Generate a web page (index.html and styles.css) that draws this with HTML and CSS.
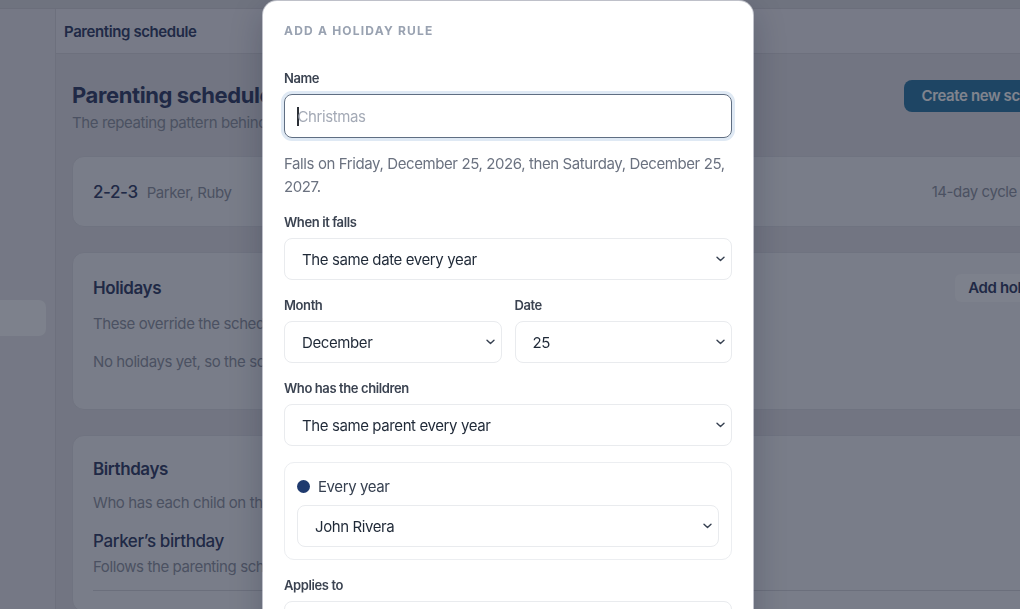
FILE: index.html
```html
<!DOCTYPE html>
<html lang="en">
<head>
<meta charset="utf-8">
<title>Parenting schedule</title>
<link rel="stylesheet" href="styles.css">
</head>
<body>
<div class="app">
  <div class="topbar"></div>
  <div class="shell">
    <aside class="sidebar">
      <div class="nav-item"></div>
    </aside>
    <div class="content">
      <header class="pagebar">Parenting schedule</header>
      <main class="main">
        <div class="page-head">
          <div>
            <h1 class="title">Parenting schedule</h1>
            <p class="subtitle">The repeating pattern behind every week of your parenting time.</p>
          </div>
          <button class="btn-primary">Create new schedule</button>
        </div>
        <div class="cards">
          <section class="card cycle-card">
            <div class="cycle-left"><span class="cycle-name">2-2-3</span><span class="kids">Parker, Ruby</span></div>
            <div class="cycle-right"><span class="muted">14-day cycle</span><span class="edit">Edit</span></div>
          </section>
          <section class="card holidays-card">
            <div class="card-head">
              <h2 class="card-title">Holidays</h2>
              <button class="btn-soft">Add holiday</button>
            </div>
            <p class="muted first">These override the schedule on the days they fall.</p>
            <p class="muted second">No holidays yet, so the schedule runs as usual all year.</p>
          </section>
          <section class="card birthdays-card">
            <h2 class="card-title">Birthdays</h2>
            <p class="muted first">Who has each child on their birthday.</p>
            <div class="bday">
              <div class="bday-name">Parker’s birthday</div>
              <div class="muted bday-sub">Follows the parenting schedule</div>
            </div>
          </section>
        </div>
      </main>
    </div>
  </div>
</div>

<div class="backdrop"></div>

<div class="modal">
  <div class="eyebrow">Add a holiday rule</div>

  <div class="field">
    <label class="label">Name</label>
    <div class="input focused"><span class="caret"></span><span class="placeholder">Christmas</span></div>
  </div>
  <p class="help">Falls on Friday, December 25, 2026, then Saturday, December 25, 2027.</p>

  <div class="field after-help">
    <label class="label">When it falls</label>
    <div class="select"><span>The same date every year</span><svg class="chev" width="9" height="6" viewBox="0 0 9 6"><path d="M1 1.2l3.5 3.4L8 1.2" fill="none" stroke="#374151" stroke-width="1.4" stroke-linecap="round" stroke-linejoin="round"/></svg></div>
  </div>

  <div class="field-row">
    <div class="field">
      <label class="label">Month</label>
      <div class="select"><span>December</span><svg class="chev" width="9" height="6" viewBox="0 0 9 6"><path d="M1 1.2l3.5 3.4L8 1.2" fill="none" stroke="#374151" stroke-width="1.4" stroke-linecap="round" stroke-linejoin="round"/></svg></div>
    </div>
    <div class="field">
      <label class="label">Date</label>
      <div class="select"><span>25</span><svg class="chev" width="9" height="6" viewBox="0 0 9 6"><path d="M1 1.2l3.5 3.4L8 1.2" fill="none" stroke="#374151" stroke-width="1.4" stroke-linecap="round" stroke-linejoin="round"/></svg></div>
    </div>
  </div>

  <div class="field">
    <label class="label">Who has the children</label>
    <div class="select"><span>The same parent every year</span><svg class="chev" width="9" height="6" viewBox="0 0 9 6"><path d="M1 1.2l3.5 3.4L8 1.2" fill="none" stroke="#374151" stroke-width="1.4" stroke-linecap="round" stroke-linejoin="round"/></svg></div>
    <div class="choice-box">
      <div class="radio-row"><span class="dot"></span><span>Every year</span></div>
      <div class="select"><span>John Rivera</span><svg class="chev" width="9" height="6" viewBox="0 0 9 6"><path d="M1 1.2l3.5 3.4L8 1.2" fill="none" stroke="#374151" stroke-width="1.4" stroke-linecap="round" stroke-linejoin="round"/></svg></div>
    </div>
  </div>

  <div class="field">
    <label class="label">Applies to</label>
    <div class="select"><span>Both children</span><svg class="chev" width="9" height="6" viewBox="0 0 9 6"><path d="M1 1.2l3.5 3.4L8 1.2" fill="none" stroke="#374151" stroke-width="1.4" stroke-linecap="round" stroke-linejoin="round"/></svg></div>
  </div>
</div>
</body>
</html>
```

FILE: styles.css
```css
* { box-sizing: border-box; }

html, body {
  margin: 0;
  height: 100%;
  overflow: hidden;
}

body {
  width: 1020px;
  height: 609px;
  position: relative;
  font-family: Inter, "Noto Sans", "Liberation Sans", sans-serif;
  letter-spacing: -0.025em;
  background: #e1e0e5;
  color: #343f66;
}

/* ---------- background page ---------- */
.app {
  display: flex;
  flex-direction: column;
  height: 609px;
}

.topbar {
  flex: none;
  height: 9px;
  background: #dcdbe0;
  border-bottom: 1px solid #d2d1d7;
}

.shell {
  flex: 1;
  display: flex;
  min-height: 0;
}

.sidebar {
  flex: none;
  width: 56px;
  background: #e7e6eb;
  border-right: 1px solid #d6d5db;
  padding-top: 291px;
}

.nav-item {
  width: 46px;
  height: 36px;
  background: #f8f8fa;
  border-radius: 0 7px 7px 0;
}

.content {
  flex: 1;
  display: flex;
  flex-direction: column;
  min-width: 0;
}

.pagebar {
  flex: none;
  height: 45px;
  display: flex;
  align-items: center;
  padding-left: 8px;
  background: #ebeaf0;
  border-bottom: 1px solid #d6d5db;
  font-size: 15px;
  font-weight: 600;
  color: #343f66;
}

.main {
  padding: 27px 16px 0;
  width: 1044px;
}

.page-head {
  display: flex;
  justify-content: space-between;
  align-items: flex-start;
}

.title {
  margin: 0;
  font-size: 22px;
  line-height: 28px;
  font-weight: 700;
  color: #343f66;
}

.subtitle {
  margin: 3px 0 0;
  font-size: 15px;
  line-height: 22px;
  color: #8f94a1;
}

.btn-primary {
  margin-top: -1px;
  height: 32px;
  padding: 0 17px;
  border: none;
  border-radius: 8px;
  background: #2f79a6;
  color: #ffffff;
  font: 600 15px/32px Inter, "Noto Sans", sans-serif;
  letter-spacing: -0.025em;
}

.cards {
  margin-top: 22px;
  display: flex;
  flex-direction: column;
  gap: 25px;
}

.card {
  background: #f1f0f4;
  border: 1px solid #dcdbe1;
  border-radius: 12px;
}

.cycle-card {
  height: 71px;
  padding: 0 20px;
  display: flex;
  align-items: center;
  justify-content: space-between;
}

.cycle-name {
  font-size: 17px;
  font-weight: 500;
  color: #343f66;
}

.kids {
  margin-left: 9px;
  font-size: 15px;
  color: #8f94a1;
}

.cycle-right {
  display: flex;
  gap: 20px;
  align-items: center;
}

.edit {
  font-size: 15px;
  font-weight: 600;
  color: #343f66;
}

.muted {
  font-size: 15px;
  line-height: 22px;
  color: #8f94a1;
}

.holidays-card {
  padding: 21px 20px 36px;
}

.birthdays-card {
  padding: 21px 20px 20px;
}

.card-head {
  height: 28px;
  display: flex;
  align-items: center;
  justify-content: space-between;
}

.card-title {
  margin: 0;
  font-size: 17px;
  line-height: 24px;
  font-weight: 600;
  color: #343f66;
}

.btn-soft {
  height: 28px;
  padding: 0 13px;
  border: none;
  border-radius: 6px;
  background: #f8f8fa;
  color: #343f66;
  font: 600 15px/28px Inter, "Noto Sans", sans-serif;
  letter-spacing: -0.025em;
}

p.muted { margin: 0; }
.muted.first { margin-top: 11px; }
.muted.second { margin-top: 16px; }

.bday {
  margin-top: 15px;
  padding-bottom: 12px;
  border-bottom: 1px solid #d3d2d8;
}

.bday-name {
  font-size: 17px;
  line-height: 24px;
  font-weight: 500;
  color: #343f66;
}

.bday-sub { margin-top: 3px; }

/* ---------- overlay + modal ---------- */
.backdrop {
  position: fixed;
  inset: 0;
  background: rgba(15, 23, 42, 0.53);
}

.modal {
  position: absolute;
  left: 263px;
  top: 1px;
  width: 490px;
  height: 680px;
  padding: 22px 21px;
  background: #ffffff;
  border-radius: 14px 14px 0 0;
  box-shadow: 0 0 0 1px rgba(226, 228, 235, 0.7), 0 12px 32px rgba(15, 23, 42, 0.25);
  color: #1f2937;
}

.eyebrow {
  font-size: 12px;
  line-height: 16px;
  font-weight: 700;
  letter-spacing: 0.1em;
  text-transform: uppercase;
  color: #99a2b1;
  margin-bottom: 30px;
}

.field + .field,
.field-row + .field,
.field + .field-row {
  margin-top: 16px;
}

.field-row > .field { margin-top: 0; }

.field.after-help { margin-top: 15px; }

.label {
  display: block;
  margin-bottom: 7px;
  font-size: 13px;
  line-height: 18px;
  font-weight: 600;
  color: #3b4351;
}

.input {
  height: 44px;
  display: flex;
  align-items: center;
  padding: 0 12px;
  border: 1.5px solid #5f6e82;
  border-radius: 8px;
  font-size: 15px;
}

.input.focused {
  box-shadow: 0 0 0 3px #dfe9f4;
}

.caret {
  width: 1.5px;
  height: 19px;
  background: #2b2f36;
  margin-right: -1px;
}

.placeholder {
  color: #a4aab6;
}

.help {
  margin: 14px 0 0;
  font-size: 15px;
  line-height: 23px;
  color: #6b7280;
}

.select {
  height: 42px;
  display: flex;
  align-items: center;
  justify-content: space-between;
  padding: 0 6px 0 17px;
  border: 1px solid #e9ebee;
  border-radius: 8px;
  background: #ffffff;
  font-size: 15px;
  color: #1f2937;
}

.chev { flex: none; }

.field-row {
  display: grid;
  grid-template-columns: 1fr 1fr;
  gap: 13px;
}

.choice-box {
  margin-top: 16px;
  padding: 12px;
  border: 1px solid #eceef1;
  border-radius: 10px;
}

.radio-row {
  height: 22px;
  display: flex;
  align-items: center;
  gap: 8px;
  font-size: 15px;
  color: #374151;
}

.dot {
  width: 13px;
  height: 13px;
  border-radius: 50%;
  background: #1f3a6e;
}

.choice-box .select { margin-top: 8px; }
```
